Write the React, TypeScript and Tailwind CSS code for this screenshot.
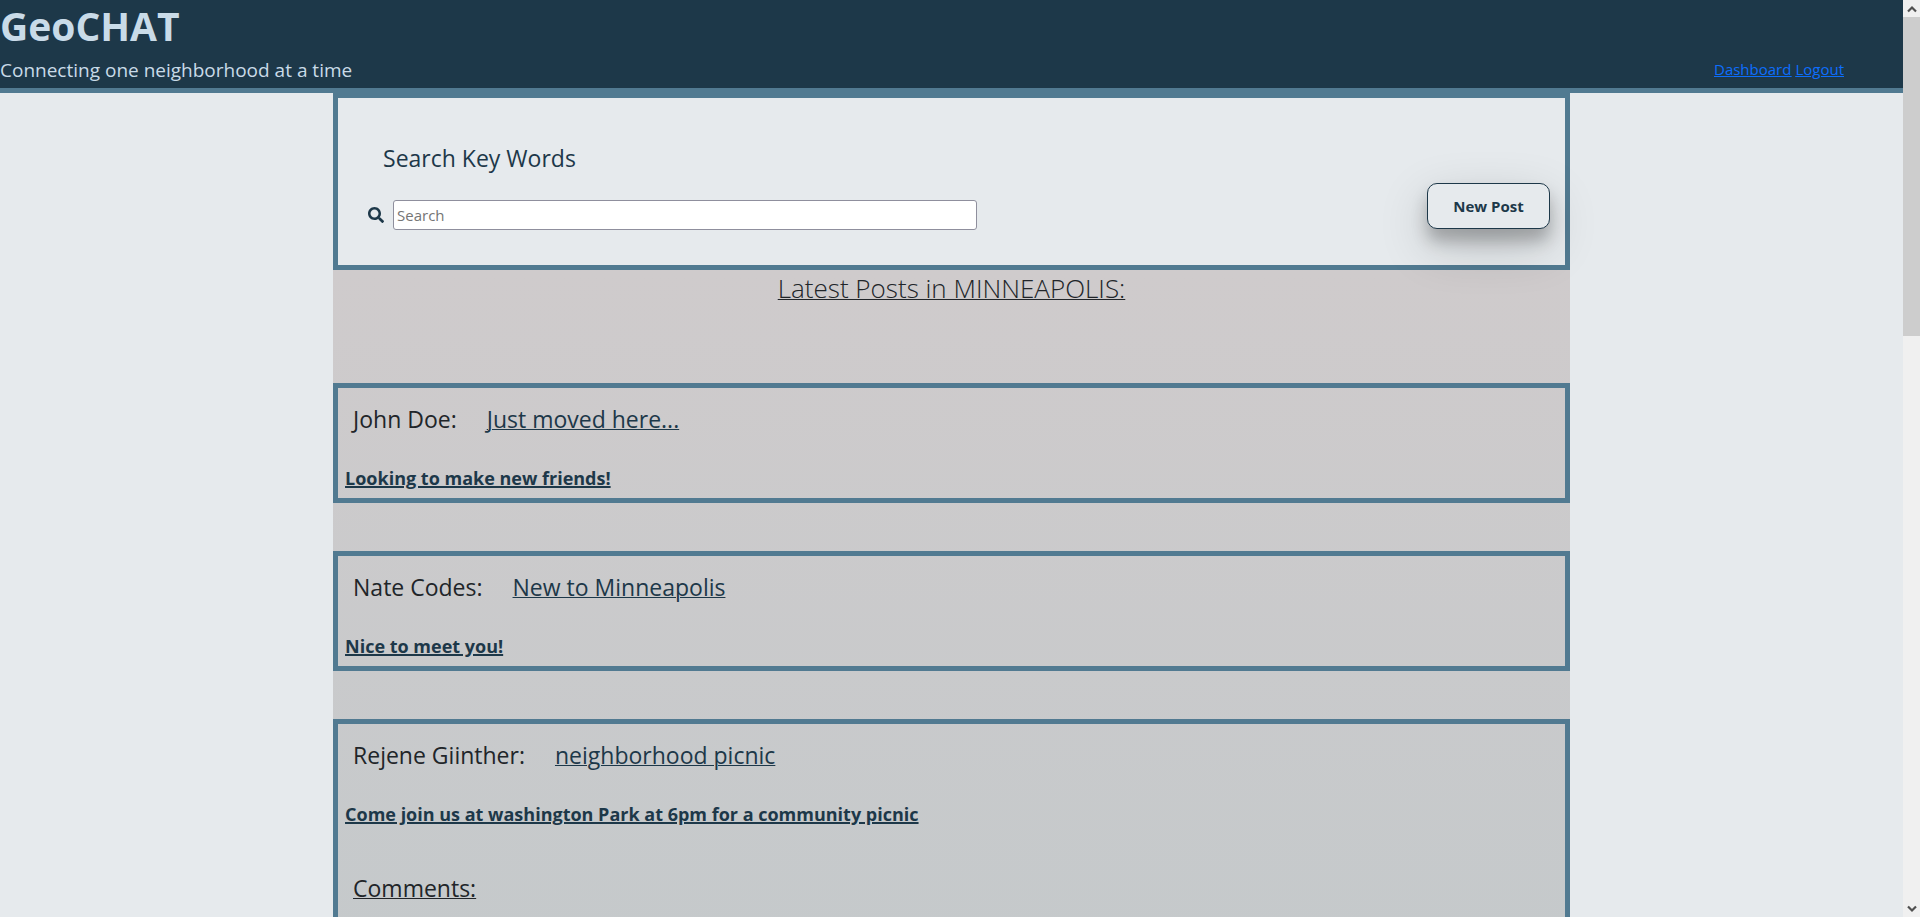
import React from "react";
import { FaSearch } from "react-icons/fa";

type Post = { author: string; title: string; body: string; showComments?: boolean };

const posts: Post[] = [
  { author: "John Doe:", title: "Just moved here...", body: "Looking to make new friends!" },
  { author: "Nate Codes:", title: "New to Minneapolis", body: "Nice to meet you!" },
  {
    author: "Rejene Giinther:",
    title: "neighborhood picnic",
    body: "Come join us at washington Park at 6pm for a community picnic",
    showComments: true,
  },
];

function Header() {
  return (
    <header className="flex items-end justify-between border-b-5 border-[#517a91] bg-[#1d3849] text-[#c9dbe8]">
      <div>
        <h1 className="h-[54px] text-[39px] leading-[52px] font-bold">GeoCHAT</h1>
        <p className="h-[34px] text-[19px] leading-[32px]">Connecting one neighborhood at a time</p>
      </div>
      <nav className="mr-[59px] flex h-[34px] gap-1 text-[15px] leading-[30px] text-[#0d6efd] underline">
        <a href="#dashboard">Dashboard</a>
        <a href="#logout">Logout</a>
      </nav>
    </header>
  );
}

function SearchPanel() {
  return (
    <section className="flex items-end justify-between border-5 border-[#517a91] bg-[#e6eaed] pt-[40px] pr-[15px] text-[#1d3849]">
      <form className="w-1/2 pb-[35px] pl-[30px]">
        <label htmlFor="search" className="block pl-[15px] text-[23px] leading-[40px]">
          Search Key Words
        </label>
        <div className="mt-[22px] flex items-center gap-[9px]">
          <FaSearch className="size-4 shrink-0" />
          <input
            id="search"
            type="text"
            placeholder="Search"
            className="h-[30px] w-[584px] shrink-0 rounded-[3px] border border-[#8f8f9d] bg-white px-[3px] text-[15px] placeholder:text-[#757575]"
          />
        </div>
      </form>
      <button
        type="button"
        className="mb-[36px] h-[46px] w-[123px] rounded-[10px] border border-[#1d3849] bg-[#e6eaed] pt-px text-[15px] font-bold shadow-[0_12px_16px_0_rgba(0,0,0,0.24),0_17px_50px_0_rgba(0,0,0,0.19)]"
      >
        New Post
      </button>
    </section>
  );
}

function PostCard({ post }: { post: Post }) {
  return (
    <article className="border-5 border-[#517a91] px-[7px] pb-[5px]">
      <div className="flex gap-[30px] px-2 pt-[11px] text-[23px] leading-[40px]">
        <h3>{post.author}</h3>
        <a href="#post" className="text-[#1d3849] underline decoration-1 underline-offset-1">
          {post.title}
        </a>
      </div>
      <p className="mt-[24px] text-[18px] leading-[30px] font-bold text-[#1d3849] underline decoration-2 underline-offset-1">
        {post.body}
      </p>
      {post.showComments && (
        <h4 className="mt-[39px] px-2 pb-10 text-[23px] leading-[40px] underline decoration-1 underline-offset-1">
          Comments:
        </h4>
      )}
    </article>
  );
}

function Scrollbar() {
  return (
    <div aria-hidden="true" className="flex w-[17px] shrink-0 flex-col bg-[#f0f0f0]">
      <div className="flex h-[17px] items-center justify-center">
        <svg viewBox="0 0 10 8" className="h-2 w-2.5" fill="none" stroke="#505050" strokeWidth="2.2">
          <path d="M1 6.5 5 2.5 9 6.5" />
        </svg>
      </div>
      <div className="h-[319px] bg-[#cdcdcd]" />
      <div className="mt-auto flex h-[17px] items-center justify-center">
        <svg viewBox="0 0 10 8" className="h-2 w-2.5" fill="none" stroke="#505050" strokeWidth="2.2">
          <path d="M1 1.5 5 5.5 9 1.5" />
        </svg>
      </div>
    </div>
  );
}

export default function App() {
  return (
    <div className="flex h-screen overflow-hidden bg-[#e6eaed] font-['Open_Sans','Noto_Sans',sans-serif] text-[#212529]">
      <div className="min-w-0 flex-1">
        <Header />
        <main className="mx-auto w-[65%]">
          <SearchPanel />
          <section className="bg-linear-to-b from-[#cfcbcc] to-[#c4c9cb] pb-12">
            <h2 className="mb-[77px] text-center text-[26px] leading-[36px] font-light underline decoration-1 underline-offset-1">
              Latest Posts in MINNEAPOLIS:
            </h2>
            <div className="flex flex-col gap-12">
              {posts.map((post) => (
                <PostCard key={post.author} post={post} />
              ))}
            </div>
          </section>
        </main>
      </div>
      <Scrollbar />
    </div>
  );
}
